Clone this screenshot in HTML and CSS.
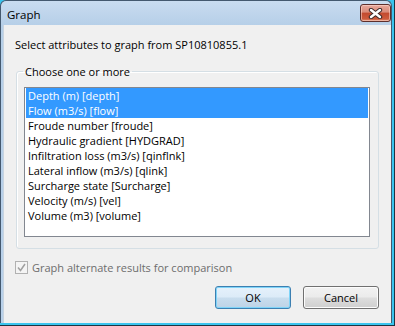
FILE: index.html
```html
<!DOCTYPE html>
<html>
<head>
<meta charset="utf-8">
<link rel="stylesheet" href="styles.css">
</head>
<body>
<div class="screen">
  <div class="window">
    <div class="titlebar">
      <span class="title">Graph</span>
      <button class="close" aria-label="Close">
        <svg width="15" height="11" viewBox="0 0 15 11">
          <path d="M3 2 L12 9 M12 2 L3 9" stroke="#3b2a2a" stroke-width="4.4" stroke-linecap="round" fill="none"/>
          <path d="M3 2 L12 9 M12 2 L3 9" stroke="#ffffff" stroke-width="2.4" stroke-linecap="round" fill="none"/>
        </svg>
      </button>
    </div>
    <div class="client">
      <p class="prompt">Select attributes to graph from SP10810855.1</p>
      <fieldset class="group">
        <legend class="group-label">Choose one or more</legend>
        <ul class="listbox">
          <li class="item selected">Depth (m) [depth]</li>
          <li class="item selected">Flow (m3/s) [flow]</li>
          <li class="item">Froude number [froude]</li>
          <li class="item">Hydraulic gradient [HYDGRAD]</li>
          <li class="item">Infiltration loss (m3/s) [qinflnk]</li>
          <li class="item">Lateral inflow (m3/s) [qlink]</li>
          <li class="item">Surcharge state [Surcharge]</li>
          <li class="item">Velocity (m/s) [vel]</li>
          <li class="item">Volume (m3) [volume]</li>
        </ul>
      </fieldset>
      <label class="check">
        <span class="box">
          <svg width="9" height="9" viewBox="0 0 9 9"><path d="M1 4.5 L3.5 7.5 L8 1" stroke="#a0a0a0" stroke-width="1.5" fill="none"/></svg>
        </span>
        <span class="check-label">Graph alternate results for comparison</span>
      </label>
      <div class="buttons">
        <button class="btn default">OK</button>
        <button class="btn">Cancel</button>
      </div>
    </div>
  </div>
</div>
</body>
</html>
```

FILE: styles.css
```css
html, body {
  margin: 0;
  padding: 0;
}
body {
  font-family: "Open Sans", "Noto Sans", sans-serif;
  font-size: 11px;
  color: #000;
}
.screen {
  width: 395px;
  height: 326px;
  box-sizing: border-box;
  background: #3ac4ee;
  border-right: 1px solid #1d3442;
  border-bottom: 1px solid #1d3442;
}
.window {
  width: 392px;
  height: 323px;
  box-sizing: border-box;
  border: 1px solid #44596f;
  border-bottom: none;
  border-radius: 6px 6px 0 0;
  background: linear-gradient(#c9dcf0, #b6cfe8 24px, #b9d1ea);
  padding-left: 2px;
  display: flex;
  flex-direction: column;
}
.titlebar {
  height: 24px;
  flex: none;
  display: flex;
  align-items: flex-start;
  justify-content: space-between;
}
.title {
  margin: 6px 0 0 4px;
  line-height: 15px;
  font-size: 11.5px;
  color: #000;
}
.close {
  margin: 3px 0 0 0;
  width: 31px;
  height: 18px;
  padding: 0;
  border: 1px solid #5d2f2c;
  border-radius: 3px;
  background: linear-gradient(#e8a99d, #d98a78 45%, #c24a2f 50%, #cd5a3c 85%, #de8a6f);
  box-shadow: inset 0 0 0 1px rgba(255, 220, 210, 0.55);
  display: flex;
  align-items: center;
  justify-content: center;
}
.close svg {
  display: block;
}
.client {
  flex: 1;
  background: #f0f0f0;
  border-left: 1px solid #c8d4e0;
  padding: 12px 12px 0 11px;
  display: flex;
  flex-direction: column;
}
.prompt {
  margin: 0;
  line-height: 15px;
}
.group {
  margin: 12px 0 0 1px;
  padding: 8px 8px 11px 7px;
  border: 1px solid #d5dfe5;
  border-radius: 3px;
  box-shadow: inset 1px 1px 0 #fff;
  min-width: 0;
}
.group-label {
  padding: 0 2px;
  margin-left: -1px;
  line-height: 15px;
}
.listbox {
  list-style: none;
  margin: 0;
  padding: 0 1px;
  height: 148px;
  background: #fff;
  border: 1px solid #828790;
}
.item {
  height: 15px;
  line-height: 15px;
  padding-left: 2px;
  white-space: nowrap;
}
.item.selected {
  background: #3399ff;
  color: #fff;
}
.check {
  margin-top: 12px;
  display: flex;
  align-items: center;
  gap: 4px;
  height: 13px;
}
.box {
  width: 11px;
  height: 11px;
  border: 1px solid #b1b1b1;
  background: #f4f4f4;
  display: flex;
  align-items: center;
  justify-content: center;
  box-sizing: content-box;
}
.box svg {
  display: block;
}
.check-label {
  color: #6d6d6d;
  line-height: 15px;
}
.buttons {
  margin-top: 12px;
  display: flex;
  justify-content: flex-end;
  gap: 12px;
}
.btn {
  width: 76px;
  height: 23px;
  padding: 0;
  font-family: inherit;
  font-size: 11px;
  color: #000;
  border: 1px solid #707070;
  border-radius: 3px;
  background: linear-gradient(#f2f2f2, #ebebeb 48%, #dddddd 52%, #cfcfcf);
  box-shadow: inset 0 0 0 1px #fcfcfc;
}
.btn.default {
  border-color: #3c7fb1;
  background: linear-gradient(#e5f1fb, #dcebf8 48%, #c8ddee 52%, #bed3e6);
  box-shadow: inset 0 0 0 1px #7fd4f8;
}
```
